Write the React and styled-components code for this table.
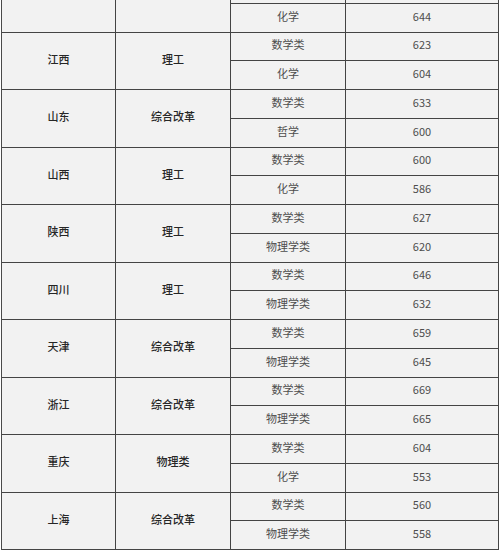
import React from "react";
import styled, { createGlobalStyle } from "styled-components";

const GlobalStyle = createGlobalStyle`
  html, body {
    margin: 0;
    padding: 0;
    background: #ffffff;
  }
`;

const Viewport = styled.div`
  width: 500px;
  height: 552px;
  overflow: hidden;
  padding-left: 1px;
  box-sizing: border-box;
  font-family: "Noto Sans CJK SC", "Noto Sans", sans-serif;
`;

const ScoreGrid = styled.div`
  margin-top: -25px;
  display: grid;
  grid-template-columns: 114px 115px 115px 153px;
  grid-auto-rows: 28.75px;
  width: max-content;
  background: #f2f2f2;
  border-left: 1px solid #4a4a4a;
`;

const Cell = styled.div`
  display: flex;
  align-items: center;
  justify-content: center;
  box-sizing: border-box;
  padding-bottom: 4px;
  border-right: 1px solid #444;
  border-bottom: 1px solid #444;
  grid-row: ${(props) => (props.$span ? "span 2" : "auto")};
  font-size: 11px;
  line-height: 14px;
  white-space: nowrap;
  color: ${(props) => (props.$strong ? "#262626" : "#4d4d4d")};
  font-weight: ${(props) => (props.$strong ? 500 : 400)};
`;

const rows = [
  { province: "", track: "", majors: [["", ""], ["化学", "644"]] },
  { province: "江西", track: "理工", majors: [["数学类", "623"], ["化学", "604"]] },
  { province: "山东", track: "综合改革", majors: [["数学类", "633"], ["哲学", "600"]] },
  { province: "山西", track: "理工", majors: [["数学类", "600"], ["化学", "586"]] },
  { province: "陕西", track: "理工", majors: [["数学类", "627"], ["物理学类", "620"]] },
  { province: "四川", track: "理工", majors: [["数学类", "646"], ["物理学类", "632"]] },
  { province: "天津", track: "综合改革", majors: [["数学类", "659"], ["物理学类", "645"]] },
  { province: "浙江", track: "综合改革", majors: [["数学类", "669"], ["物理学类", "665"]] },
  { province: "重庆", track: "物理类", majors: [["数学类", "604"], ["化学", "553"]] },
  { province: "上海", track: "综合改革", majors: [["数学类", "560"], ["物理学类", "558"]] },
];

export default function App() {
  return (
    <Viewport>
      <GlobalStyle />
      <ScoreGrid>
        {rows.map((row, idx) => (
          <React.Fragment key={idx}>
            <Cell $strong $span>{row.province}</Cell>
            <Cell $strong $span>{row.track}</Cell>
            {row.majors.map(([major, score], i) => (
              <React.Fragment key={i}>
                <Cell>{major}</Cell>
                <Cell>{score}</Cell>
              </React.Fragment>
            ))}
          </React.Fragment>
        ))}
      </ScoreGrid>
    </Viewport>
  );
}
